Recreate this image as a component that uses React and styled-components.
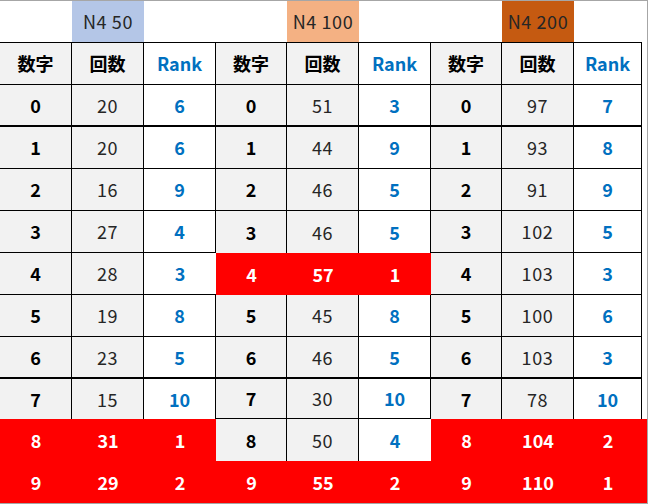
import React from "react";
import styled, { createGlobalStyle } from "styled-components";

const Global = createGlobalStyle`
  html, body { margin: 0; padding: 0; background: #ffffff; }
  body { font-family: "Noto Sans CJK JP", "Noto Sans", sans-serif; }
`;

const COLS = [72, 72, 72, 71, 72, 72, 71, 72, 68, 5];
const ROWS = [42, 42, 42, 42, 42, 42, 42, 42, 42, 40, 42, 42];

const Sheet = styled.div`
  width: 648px;
  height: 504px;
  box-sizing: border-box;
  border-top: 1px solid #a6a6a6;
  border-right: 1px solid #a6a6a6;
  border-bottom: 1px solid #a6a6a6;
  display: grid;
  grid-template-columns: ${COLS.map((c) => c + "px").join(" ")};
  grid-template-rows: ${ROWS.map((r) => r + "px").join(" ")};
  background: #ffffff;
`;

const BG = {
  white: "#ffffff",
  gray: "#f2f2f2",
  red: "#ff0000",
  blue: "#b4c6e7",
  peach: "#f4b183",
  rust: "#c55a11",
};

const COLOR = {
  digit: "#000000",
  count: "#262626",
  rank: "#0070c0",
  head: "#000000",
  rankHead: "#0070c0",
  label: "#262626",
  hot: "#ffffff",
  none: "#000000",
};

const Cell = styled.div`
  box-sizing: border-box;
  display: flex;
  align-items: center;
  justify-content: center;
  background: ${(p) => BG[p.$bg]};
  color: ${(p) => COLOR[p.$kind]};
  font-size: 18px;
  font-weight: ${(p) => (p.$kind === "count" || p.$kind === "label" ? 400 : 700)};
  letter-spacing: ${(p) => (p.$kind === "count" || p.$kind === "label" ? "0.6px" : "0")};
  border-right: ${(p) => (p.$br ? "1px solid #000" : "none")};
  border-bottom: ${(p) => (p.$bb ? `${p.$bb}px solid #000` : "none")};
  padding-bottom: 1px;
  line-height: 1;
  white-space: nowrap;
`;

const groups = [
  {
    label: "N4 50",
    labelBg: "blue",
    counts: [20, 20, 16, 27, 28, 19, 23, 15, 31, 29],
    ranks: [6, 6, 9, 4, 3, 8, 5, 10, 1, 2],
    hot: [8, 9],
  },
  {
    label: "N4 100",
    labelBg: "peach",
    counts: [51, 44, 46, 46, 57, 45, 46, 30, 50, 55],
    ranks: [3, 9, 5, 5, 1, 8, 5, 10, 4, 2],
    hot: [4, 9],
  },
  {
    label: "N4 200",
    labelBg: "rust",
    counts: [97, 93, 91, 102, 103, 100, 103, 78, 104, 110],
    ranks: [7, 8, 9, 5, 3, 6, 3, 10, 2, 1],
    hot: [8, 9],
  },
];

function buildMatrix() {
  const rows = [];
  const top = [];
  groups.forEach((g) => {
    top.push({ text: "", kind: "none", bg: "white", top: true });
    top.push({ text: g.label, kind: "label", bg: g.labelBg, top: true });
    top.push({ text: "", kind: "none", bg: "white", top: true });
  });
  top.push({ text: "", kind: "none", bg: "white", filler: true });
  rows.push(top);
  const head = [];
  groups.forEach(() => {
    head.push({ text: "数字", kind: "head", bg: "gray" });
    head.push({ text: "回数", kind: "head", bg: "gray" });
    head.push({ text: "Rank", kind: "rankHead", bg: "white" });
  });
  head.push({ text: "", kind: "none", bg: "white", filler: true });
  rows.push(head);
  for (let i = 0; i < 10; i++) {
    const r = [];
    groups.forEach((g) => {
      const hot = g.hot.includes(i);
      r.push({ text: String(i), kind: hot ? "hot" : "digit", bg: hot ? "red" : "gray", red: hot });
      r.push({ text: String(g.counts[i]), kind: hot ? "hot" : "count", bg: hot ? "red" : "gray", red: hot });
      r.push({ text: String(g.ranks[i]), kind: hot ? "hot" : "rank", bg: hot ? "red" : "white", red: hot });
    });
    const redRow = i >= 8;
    r.push({ text: "", kind: "none", bg: redRow ? "red" : "white", filler: true, red: redRow });
    rows.push(r);
  }
  return rows;
}

function borders(rows, ri, ci) {
  const c = rows[ri][ci];
  if (c.filler || c.red) return { br: false, bb: 0 };
  if (c.top) return { br: false, bb: 1 };
  const right = rows[ri][ci + 1];
  const below = rows[ri + 1] ? rows[ri + 1][ci] : null;
  const br = !(right && right.red && !right.filler);
  let bb = 1;
  if (ri === 2 || ri === 8) bb = 2;
  if (below && below.red) bb = 0;
  return { br, bb };
}

export default function App() {
  const rows = buildMatrix();
  return (
    <>
      <Global />
      <Sheet>
        {rows.map((row, ri) =>
          row.map((c, ci) => {
            const b = borders(rows, ri, ci);
            return (
              <Cell key={ri + "-" + ci} $bg={c.bg} $kind={c.kind} $br={b.br} $bb={b.bb}>
                {c.text}
              </Cell>
            );
          })
        )}
      </Sheet>
    </>
  );
}
